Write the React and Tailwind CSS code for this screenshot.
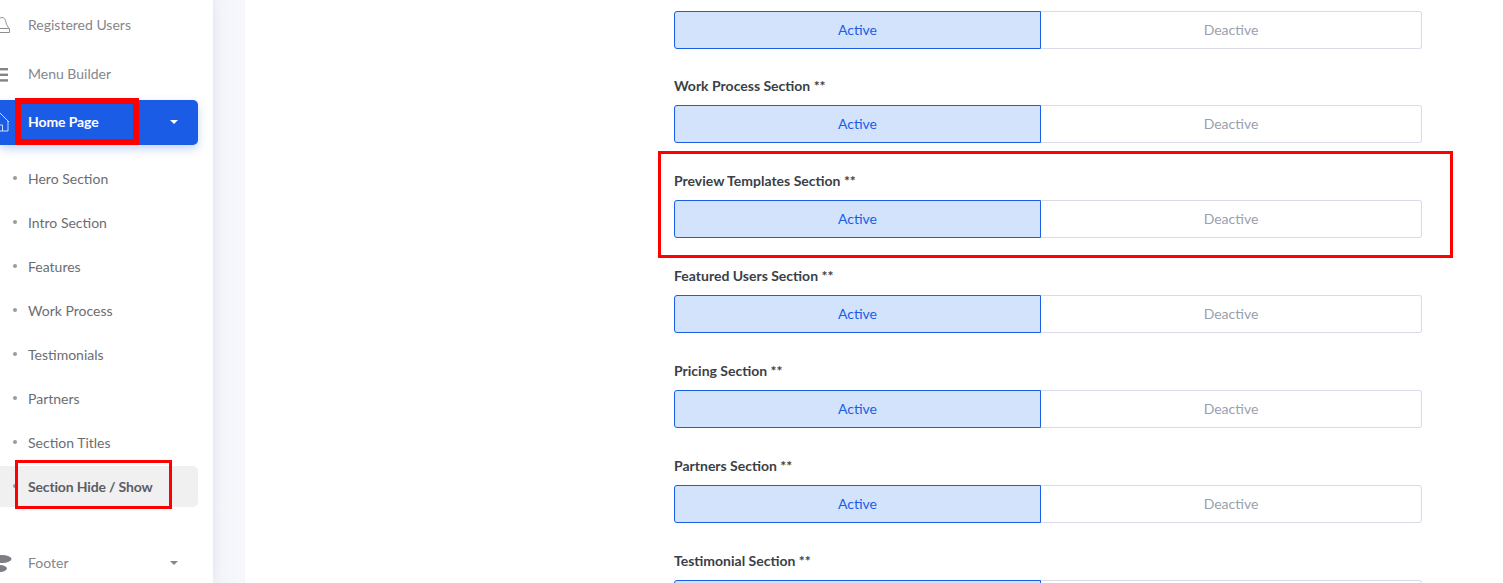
import React from 'react';

const subItems = ['Hero Section', 'Intro Section', 'Features', 'Work Process', 'Testimonials', 'Partners', 'Section Titles'];

const sections = [
  'Work Process Section',
  'Preview Templates Section',
  'Featured Users Section',
  'Pricing Section',
  'Partners Section',
];

const Caret = ({ className }) => (
  <span className={`ml-auto mr-[20px] h-0 w-0 border-x-[4px] border-t-[4px] border-x-transparent ${className}`}></span>
);

const BellIcon = () => (
  <svg className="absolute left-[-10px] top-[13px] h-[20px] w-[20px]" viewBox="0 0 20 20" fill="none" stroke="#8f9096" strokeWidth="1">
    <path d="M12 1.500c2.500 0 3.500 2 4 5 .5 2.500 2 4.500 3.500 6.500v3.500H8" />
    <path d="M8 12.500h11.500" />
    <path d="M12 1.500C10 1.500 9 3.500 8 6" />
  </svg>
);

const MenuIcon = () => (
  <svg className="absolute left-[-6px] top-[15px] h-[16px] w-[16px]" viewBox="0 0 16 16" fill="#83848a">
    <rect x="0" y="1" width="14" height="2.400" />
    <rect x="0" y="6.600" width="14" height="2.400" />
    <rect x="0" y="12.200" width="14" height="2.400" />
  </svg>
);

const HomeIcon = () => (
  <svg className="absolute left-[-10px] top-[12px] h-[20px] w-[20px]" viewBox="0 0 20 20" fill="none" stroke="#cfdcf8" strokeWidth="1">
    <path d="M10 1l9 9" />
    <path d="M18 9v10H8" />
    <path d="M12.500 19v-6H7" />
  </svg>
);

const FooterIcon = () => (
  <svg className="absolute left-[-8px] top-[10px] h-[22px] w-[20px]" viewBox="0 0 20 22" fill="#7d7e84">
    <ellipse cx="10" cy="8" rx="9.500" ry="4" />
    <ellipse cx="7" cy="17.500" rx="8" ry="3.500" />
  </svg>
);

const NavRow = ({ label, icon, children }) => (
  <div className="relative flex h-[45px] items-center pb-[2px] pl-[28px] text-[14px] text-[#85868c]">
    {icon}
    <span>{label}</span>
    {children}
  </div>
);

const Toggle = ({ empty }) => (
  <div className="flex h-[38px] shrink-0 text-[14px]">
    <div className="flex w-[367px] items-center justify-center rounded-l-[3px] border border-[#1a5ee6] bg-[#d3e3fb] pb-[1px] text-[#1a5ee6]">{!empty && 'Active'}</div>
    <div className="flex flex-1 items-center justify-center rounded-r-[3px] border border-l-0 border-[#d9dce6] bg-white pb-[1px] text-[#9a9fae]">{!empty && 'Deactive'}</div>
  </div>
);

const Field = ({ label, empty }) => (
  <div className="shrink-0">
    <label className="mb-[7.71px] block h-[22.3px] text-[14px] font-bold leading-[22.3px] text-[#3b3f47]">{label} **</label>
    <Toggle empty={empty} />
  </div>
);

export default function App() {
  return (
    <div className="relative flex h-[583px] overflow-hidden bg-white font-['Lato','Liberation_Sans',sans-serif]">
      {/* sidebar is scrolled, so the icons are cut off on the left */}
      <aside className="relative z-10 w-[213px] shrink-0 overflow-hidden bg-white pt-[3px] pr-[15px] shadow-[0_0_10px_rgba(70,90,140,0.1)]">
        <div className="mb-[4px]">
          <NavRow label="Registered Users" icon={<BellIcon />} />
        </div>
        <div className="mb-[3px]">
          <NavRow label="Menu Builder" icon={<MenuIcon />} />
        </div>
        <div className="relative flex h-[45px] items-center rounded-r-[5px] bg-[#1a5ce5] pb-[2px] pl-[28px] text-[14px] font-bold text-white shadow-[0_4px_10px_rgba(26,92,229,0.25)]">
          <HomeIcon />
          <span className="tracking-[-0.1px]">Home Page</span>
          <Caret className="border-t-white" />
        </div>

        <ul className="mt-[12px] text-[14px] text-[#6c6d73]">
          {subItems.map((item) => (
            <li key={item} className="relative flex h-[44px] items-center pb-[2px] pl-[28px]">
              <span className="absolute left-[13px] h-[4px] w-[4px] rounded-full bg-[#9a9ba0]"></span>
              {item}
            </li>
          ))}
          <li className="relative h-[44px] pt-[1px]">
            <div className="flex h-[41px] w-full items-center rounded-r-[5px] bg-[#f0f0f1] pb-[1px] pl-[28px] font-bold tracking-[-0.16px] text-[#5c5d64]">
              <span className="absolute left-[13px] h-[4px] w-[4px] rounded-full bg-[#9a9ba0]"></span>
              Section Hide / Show
            </div>
          </li>
        </ul>

        <div className="mt-[32px]">
          <NavRow label="Footer" icon={<FooterIcon />}>
            <Caret className="border-t-[#85868c]" />
          </NavRow>
        </div>
      </aside>

      <div className="w-[32px] shrink-0 bg-linear-to-r from-[#f2f4f9] to-[#f7f8fc]"></div>

      <main className="flex flex-1 flex-col gap-[26.83px] bg-white pt-[10.6px] pl-[429px] pr-[81px]">
        <Toggle />
        {sections.map((s) => (
          <Field key={s} label={s} />
        ))}
        <Field label="Testimonial Section" empty />
      </main>

      {/* red annotation boxes drawn over the screenshot */}
      <div className="absolute left-[15px] top-[98px] z-20 h-[47px] w-[124px] border-[6px] border-[#fe0000]"></div>
      <div className="absolute left-[15px] top-[460px] z-20 h-[49px] w-[157px] border-[3px] border-[#fe0000]"></div>
      <div className="absolute left-[658px] top-[151px] z-20 h-[107px] w-[795px] border-[3px] border-[#fe0000]"></div>
    </div>
  );
}
